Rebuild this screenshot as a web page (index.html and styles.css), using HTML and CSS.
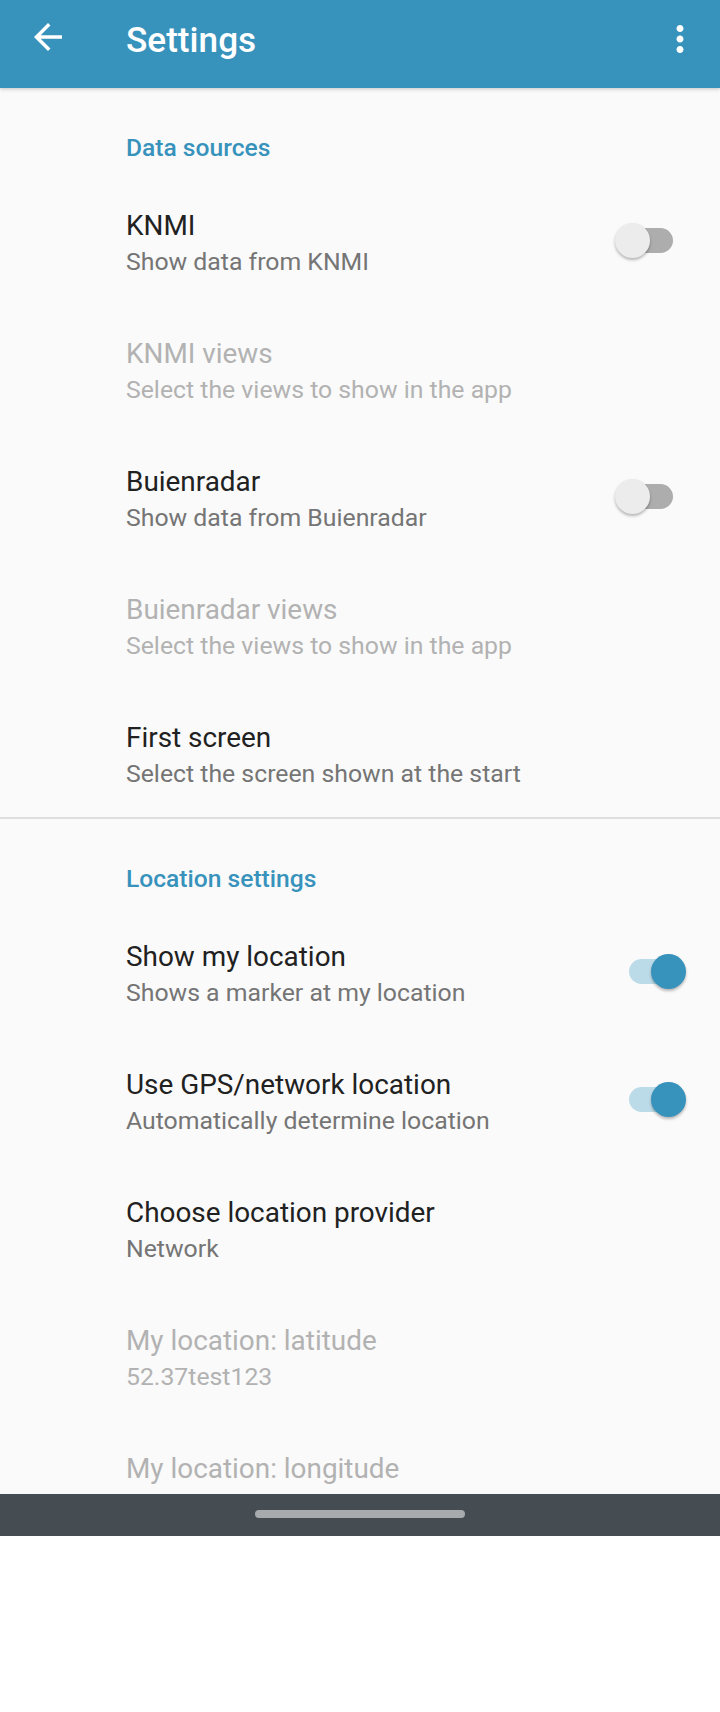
FILE: index.html
```html
<!DOCTYPE html>
<html lang="en">
<head>
<meta charset="utf-8">
<title>Settings</title>
<link rel="stylesheet" href="styles.css">
</head>
<body>
<div class="screen">
  <header class="appbar">
    <div class="appbar-nav">
      <svg width="42" height="42" viewBox="0 0 24 24"><path fill="#fff" d="M20 11H7.83l5.59-5.59L12 4l-8 8 8 8 1.41-1.41L7.830 13H20v-2z"/></svg>
    </div>
    <h1 class="appbar-title">Settings</h1>
    <div class="appbar-menu">
      <svg width="42" height="42" viewBox="0 0 24 24"><path fill="#fff" d="M12 8c1.1 0 2-.9 2-2s-.9-2-2-2-2 .9-2 2 .9 2 2 2zm0 2c-1.1 0-2 .9-2 2s.9 2 2 2 2-.9 2-2-.9-2-2-2zm0 6c-1.1 0-2 .9-2 2s.9 2 2 2 2-.9 2-2-.9-2-2-2z"/></svg>
    </div>
  </header>

  <main class="content">
    <section class="pref-section">
      <div class="category">Data sources</div>
      <div class="pref">
        <div class="pref-text">
          <div class="pref-title">KNMI</div>
          <div class="pref-summary">Show data from KNMI</div>
        </div>
        <div class="switch switch-off"><span class="switch-track"></span><span class="switch-thumb"></span></div>
      </div>
      <div class="pref pref-disabled">
        <div class="pref-text">
          <div class="pref-title">KNMI views</div>
          <div class="pref-summary">Select the views to show in the app</div>
        </div>
      </div>
      <div class="pref">
        <div class="pref-text">
          <div class="pref-title">Buienradar</div>
          <div class="pref-summary">Show data from Buienradar</div>
        </div>
        <div class="switch switch-off"><span class="switch-track"></span><span class="switch-thumb"></span></div>
      </div>
      <div class="pref pref-disabled">
        <div class="pref-text">
          <div class="pref-title">Buienradar views</div>
          <div class="pref-summary">Select the views to show in the app</div>
        </div>
      </div>
      <div class="pref">
        <div class="pref-text">
          <div class="pref-title">First screen</div>
          <div class="pref-summary">Select the screen shown at the start</div>
        </div>
      </div>
    </section>

    <div class="divider"></div>

    <section class="pref-section">
      <div class="category">Location settings</div>
      <div class="pref">
        <div class="pref-text">
          <div class="pref-title">Show my location</div>
          <div class="pref-summary">Shows a marker at my location</div>
        </div>
        <div class="switch switch-on"><span class="switch-track"></span><span class="switch-thumb"></span></div>
      </div>
      <div class="pref">
        <div class="pref-text">
          <div class="pref-title">Use GPS/network location</div>
          <div class="pref-summary">Automatically determine location</div>
        </div>
        <div class="switch switch-on"><span class="switch-track"></span><span class="switch-thumb"></span></div>
      </div>
      <div class="pref">
        <div class="pref-text">
          <div class="pref-title">Choose location provider</div>
          <div class="pref-summary">Network</div>
        </div>
      </div>
      <div class="pref pref-disabled">
        <div class="pref-text">
          <div class="pref-title">My location: latitude</div>
          <div class="pref-summary">52.37test123</div>
        </div>
      </div>
      <div class="pref pref-disabled pref-last">
        <div class="pref-text">
          <div class="pref-title">My location: longitude</div>
        </div>
      </div>
    </section>
  </main>

  <nav class="navbar">
    <span class="nav-handle"></span>
  </nav>
</div>
</body>
</html>
```

FILE: styles.css
```css
* {
  box-sizing: border-box;
}

html, body {
  margin: 0;
  padding: 0;
  background: #ffffff;
}

body {
  font-family: Roboto, "Noto Sans", "Liberation Sans", sans-serif;
}

.screen {
  width: 720px;
  height: 1536px;
  display: flex;
  flex-direction: column;
  background: #fafafa;
}

.appbar {
  position: relative;
  z-index: 2;
  flex: none;
  height: 88px;
  display: flex;
  align-items: flex-start;
  background: #3792bc;
  box-shadow: 0 1px 4px rgba(0, 0, 0, 0.22);
}

.appbar-nav {
  margin: 16px 0 0 27px;
  width: 42px;
  height: 42px;
}

.appbar-nav svg,
.appbar-menu svg {
  display: block;
}

.appbar-title {
  margin: 20px 0 0 57px;
  flex: 1;
  font-size: 35.2px;
  line-height: 40px;
  font-weight: 500;
  color: #ffffff;
}

.appbar-menu {
  margin: 18px 19px 0 0;
  width: 42px;
  height: 42px;
}

.content {
  flex: 1;
  overflow: hidden;
}

.category {
  padding: 46px 0 15px 126px;
  font-size: 24.6px;
  line-height: 28px;
  font-weight: 500;
  color: #3792bc;
}

.pref {
  height: 128px;
  display: flex;
  align-items: center;
  padding: 0 34px 0 126px;
}

.pref-last {
  align-items: flex-start;
}

.pref-text {
  flex: 1;
  padding-top: 5px;
}

.pref-last .pref-text {
  padding-top: 30px;
}

.pref-title {
  font-size: 27.9px;
  line-height: 37px;
  color: #212121;
  white-space: nowrap;
}

.pref-summary {
  font-size: 24.8px;
  line-height: 36px;
  color: #757575;
  white-space: nowrap;
}

.pref-disabled .pref-title,
.pref-disabled .pref-summary {
  color: #b2b2b2;
}

.divider {
  height: 2px;
  background: #dedede;
}

.switch {
  position: relative;
  flex: none;
  width: 71px;
  height: 35px;
  margin-bottom: 2px;
}

.switch-track {
  position: absolute;
  left: 14px;
  top: 5px;
  width: 44px;
  height: 25px;
  border-radius: 13px;
}

.switch-thumb {
  position: absolute;
  top: 0;
  width: 35px;
  height: 35px;
  border-radius: 50%;
  box-shadow: 0 2px 3px rgba(0, 0, 0, 0.28);
}

.switch-off .switch-track {
  background: #adadad;
}

.switch-off .switch-thumb {
  left: 0;
  background: #ececec;
}

.switch-on .switch-track {
  background: #bcdbe9;
}

.switch-on .switch-thumb {
  left: 36px;
  background: #3792bc;
}

.navbar {
  flex: none;
  height: 42px;
  background: #454c52;
  display: flex;
  justify-content: center;
  align-items: flex-start;
}

.nav-handle {
  margin-top: 16px;
  width: 210px;
  height: 8px;
  border-radius: 4px;
  background: #a7abae;
}
```
